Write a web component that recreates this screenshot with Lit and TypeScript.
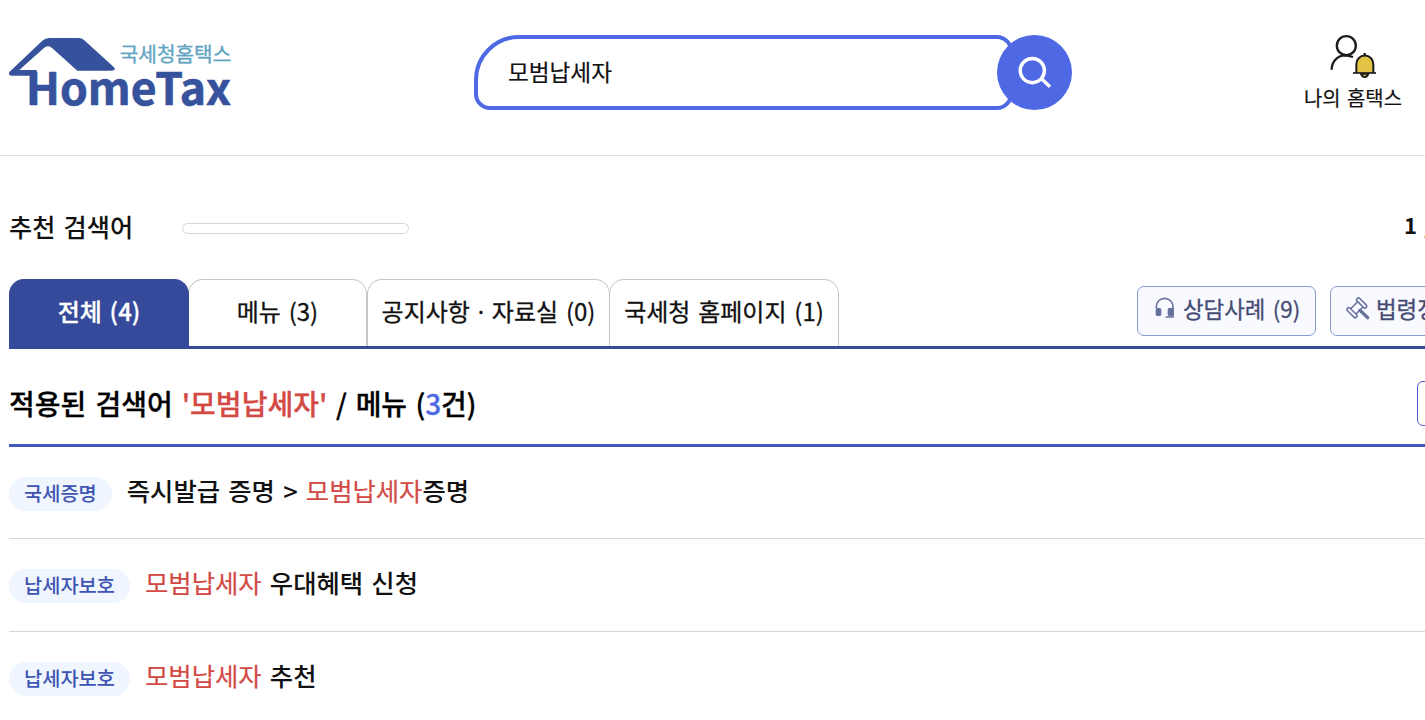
import { LitElement, html, css, svg } from 'lit';
import { customElement, property, state } from 'lit/decorators.js';
import { classMap } from 'lit/directives/class-map.js';

const FONT = css`"Noto Sans CJK KR", "Noto Sans", sans-serif`;

const logo = svg`
  <path fill="#37529d" d="M28 141 L127 47 Q136 39 148 39 L236 39 Q246 39 252 45 L342 127 Q349 137 336 137
    L232 137 L157 70 Q144 58 131 70 L58 135 L110 135 L110 240 L89 240 L89 152 L34 152 Q24 150 28 141 Z" />
  <text class="logo-sub" x="359" y="110" textLength="335" lengthAdjust="spacingAndGlyphs">국세청홈택스</text>
  <text class="logo-main" x="79" y="240" textLength="614" lengthAdjust="spacingAndGlyphs">HomeTax</text>
`;

const headset = html`
  <svg class="icon" width="20" height="22" viewBox="0 0 60 66">
    <path d="M4 34 V29 A25 25 0 0 1 54 29 V60 H32" fill="none" stroke="#65709c" stroke-width="5" />
    <rect x="2" y="33" width="17" height="24" rx="5" fill="#65709c" />
    <rect x="38" y="33" width="18" height="24" rx="5" fill="#65709c" />
  </svg>
`;

const gavel = html`
  <svg class="icon" width="24" height="23" viewBox="0 0 72 69">
    <g fill="none" stroke="#65709c" stroke-width="4.5">
      <rect x="28" y="12.5" width="38" height="11" rx="5.5" transform="rotate(45 47 18)" />
      <rect x="-1" y="41.5" width="38" height="11" rx="5.5" transform="rotate(45 18 47)" />
      <path d="M35 14 L14 35 M51 30 L30 51" />
    </g>
    <path d="M42 40 L65 62" stroke="#65709c" stroke-width="10" stroke-linecap="round" />
  </svg>
`;

@customElement('search-box')
export class SearchBox extends LitElement {
  @property() value = '';

  static styles = css`
    :host {
      display: flex;
      width: 598px;
      height: 75px;
    }

    .field {
      box-sizing: border-box;
      width: 539px;
      height: 75px;
      padding-left: 30px;
      border: 4px solid #4e69e3;
      border-radius: 45px 16px 16px 16px;
      font: 400 22.6px/66px ${FONT};
      color: #111;
      -webkit-text-stroke: 0.2px;
    }

    .submit {
      width: 75px;
      height: 75px;
      margin-left: -16px;
      padding: 0;
      border: 0;
      border-radius: 50%;
      background: #4e69e3;
    }

    svg {
      display: block;
    }
  `;

  render() {
    return html`
      <div class="field">${this.value}</div>
      <button class="submit">
        <svg width="75" height="75" viewBox="0 0 75 75" fill="none" stroke="#fff" stroke-width="3.4">
          <circle cx="35.3" cy="35.6" r="12.1" />
          <path d="M44 43.3 L53 51.7" />
        </svg>
      </button>
    `;
  }
}

@customElement('app-root')
export class AppRoot extends LitElement {
  @state() active = 0;

  tabs = [
    { label: '전체 (4)', size: 'all' },
    { label: '메뉴 (3)', size: 'menu' },
    { label: html`공지사항 <span class="dot">·</span> 자료실 (0)`, size: 'notice' },
    { label: '국세청 홈페이지 (1)', size: 'home' },
  ];

  results = [
    { badge: '국세증명', before: '즉시발급 증명 > ', after: '증명' },
    { badge: '납세자보호', before: '', after: ' 우대혜택 신청' },
    { badge: '납세자보호', before: '', after: ' 추천' },
  ];

  static styles = css`
    :host {
      display: block;
      width: 100%;
      height: 720px;
      overflow: hidden;
      background: #fff;
      color: #111;
      font-family: ${FONT};
    }

    * {
      word-spacing: 0.1em;
    }

    header {
      display: flex;
      box-sizing: border-box;
      height: 156px;
      border-bottom: 1px solid #dfdfdf;
    }

    .logo {
      width: 250px;
      height: 95px;
      margin-top: 25px;
    }

    .logo-sub {
      font: 400 60px ${FONT};
      fill: #62a3c1;
      stroke: #62a3c1;
      stroke-width: 1;
    }

    .logo-main {
      font: 700 134px ${FONT};
      fill: #37529d;
      stroke: #37529d;
      stroke-width: 2;
    }

    search-box {
      margin: 35px 0 0 224px;
    }

    .my {
      display: flex;
      flex-direction: column;
      width: 130px;
      margin: 25px 0 0 223px;
    }

    .my span {
      margin-left: 9px;
      font-size: 19.9px;
      line-height: 28px;
      -webkit-text-stroke: 0.2px;
    }

    main {
      width: 1600px;
      padding-left: 9px;
    }

    .recommend {
      display: flex;
      align-items: center;
      height: 123px;
    }

    .recommend h2 {
      width: 173px;
      margin: 16px 0 0;
      font-size: 25.2px;
      font-weight: 500;
      line-height: 36px;
    }

    .keywords {
      box-sizing: border-box;
      width: 227px;
      height: 11px;
      margin-top: 22px;
      border: 1px solid #d6d6d6;
      border-radius: 6px;
    }

    .count {
      margin: 13px 0 0 995px;
      font-size: 22px;
      font-weight: 700;
    }

    .tabbar {
      display: flex;
      height: 67px;
      border-bottom: 3px solid #364a9b;
    }

    .tab {
      box-sizing: border-box;
      height: 67px;
      border: 1px solid #c6c6c6;
      border-bottom: 0;
      border-radius: 15px 15px 0 0;
      font-size: 24px;
      line-height: 62px;
      text-align: center;
      white-space: nowrap;
      -webkit-text-stroke: 0.3px;
    }

    .tab.active {
      position: relative;
      z-index: 1;
      border-color: #364a9b;
      background: #364a9b;
      color: #fff;
      font-weight: 500;
    }

    .dot {
      font-family: "Noto Sans", sans-serif;
    }

    .all { width: 180px; }
    .menu { width: 179px; margin-left: -1px; }
    .notice { width: 243px; }
    .home { width: 230px; margin-left: -1px; }

    .links {
      display: flex;
      gap: 14px;
      margin: 7px 0 0 298px;
    }

    .link {
      display: flex;
      box-sizing: border-box;
      width: 179px;
      height: 50px;
      padding-left: 17px;
      border: 1px solid #869cce;
      border-radius: 7px;
      background: #f9faff;
      color: #454b73;
      font-size: 22.4px;
      line-height: 43px;
      white-space: nowrap;
      -webkit-text-stroke: 0.3px;
    }

    .link .icon {
      flex: none;
      margin: 10px 8px 0 0;
    }

    .link.law {
      padding-left: 15px;
    }

    .link.law .icon {
      margin-right: 6px;
    }

    .title {
      display: flex;
      justify-content: space-between;
      height: 95px;
      border-bottom: 3px solid #4258bc;
    }

    .title h1 {
      margin: 0;
      color: #000;
      font-size: 28px;
      font-weight: 500;
      line-height: 109px;
      -webkit-text-stroke: 0.3px;
    }

    .title .tail {
      letter-spacing: -0.25px;
    }

    .title .sort {
      box-sizing: border-box;
      width: 120px;
      height: 45px;
      margin: 32px 72px 0 0;
      border: 1px solid #5656cf;
      border-radius: 6px;
    }

    .hit { color: #d34a45; }
    .num { color: #4e69e3; }

    ul {
      margin: 0;
      padding: 0;
      list-style: none;
    }

    li {
      display: flex;
      box-sizing: border-box;
      height: 92.4px;
      border-bottom: 1px solid #d6d6d6;
    }

    .badge {
      height: 34px;
      margin: 30px 15px 0 0;
      padding: 0 15px;
      border-radius: 17px;
      background: #eff6ff;
      color: #4054b2;
      font-size: 19.8px;
      font-weight: 500;
      line-height: 31px;
    }

    .name {
      font-size: 25.35px;
      font-weight: 500;
      line-height: 86px;
      white-space: pre;
    }

    .name .hit {
      font-weight: 400;
      -webkit-text-stroke: 0.2px;
    }
  `;

  render() {
    return html`
      <header>
        <svg class="logo" viewBox="0 0 750 285">${logo}</svg>
        <search-box value="모범납세자"></search-box>
        <div class="my">
          <svg width="130" height="59" viewBox="0 0 390 177" fill="none" stroke="#1c1c1c" stroke-width="7">
            <circle cx="154" cy="62" r="28.5" />
            <path d="M110 134 C110 111 126 92 150 91 C160 91 166 93 174 96" />
            <path d="M209 84 V92" />
            <path fill="#e3c345" stroke-width="6" d="M198 146 Q201 156 209 156 Q217 156 220 146 Z" />
            <path fill="#e3c345" stroke-width="6" d="M184 144 V117 A25.5 25.5 0 0 1 235 117 V144" />
            <path stroke-width="5" d="M174 144 H243" />
          </svg>
          <span>나의 홈택스</span>
        </div>
      </header>
      <main>
        <section class="recommend">
          <h2>추천 검색어</h2>
          <div class="keywords"></div>
          <div class="count">1 / 1</div>
        </section>
        <nav class="tabbar">
          ${this.tabs.map((tab, i) => html`
            <div class=${classMap({ tab: true, [tab.size]: true, active: i === this.active })}
              @click=${() => { this.active = i; }}>${tab.label}</div>
          `)}
          <div class="links">
            <div class="link">${headset}상담사례 (9)</div>
            <div class="link law">${gavel}법령정보</div>
          </div>
        </nav>
        <section class="title">
          <h1>적용된 검색어 <span class="hit">'모범납세자'</span><span class="tail"> / 메뉴 (<span class="num">3</span>건)</span></h1>
          <div class="sort"></div>
        </section>
        <ul>
          ${this.results.map(item => html`
            <li>
              <span class="badge">${item.badge}</span>
              <span class="name">${item.before}<span class="hit">모범납세자</span>${item.after}</span>
            </li>
          `)}
        </ul>
      </main>
    `;
  }
}
